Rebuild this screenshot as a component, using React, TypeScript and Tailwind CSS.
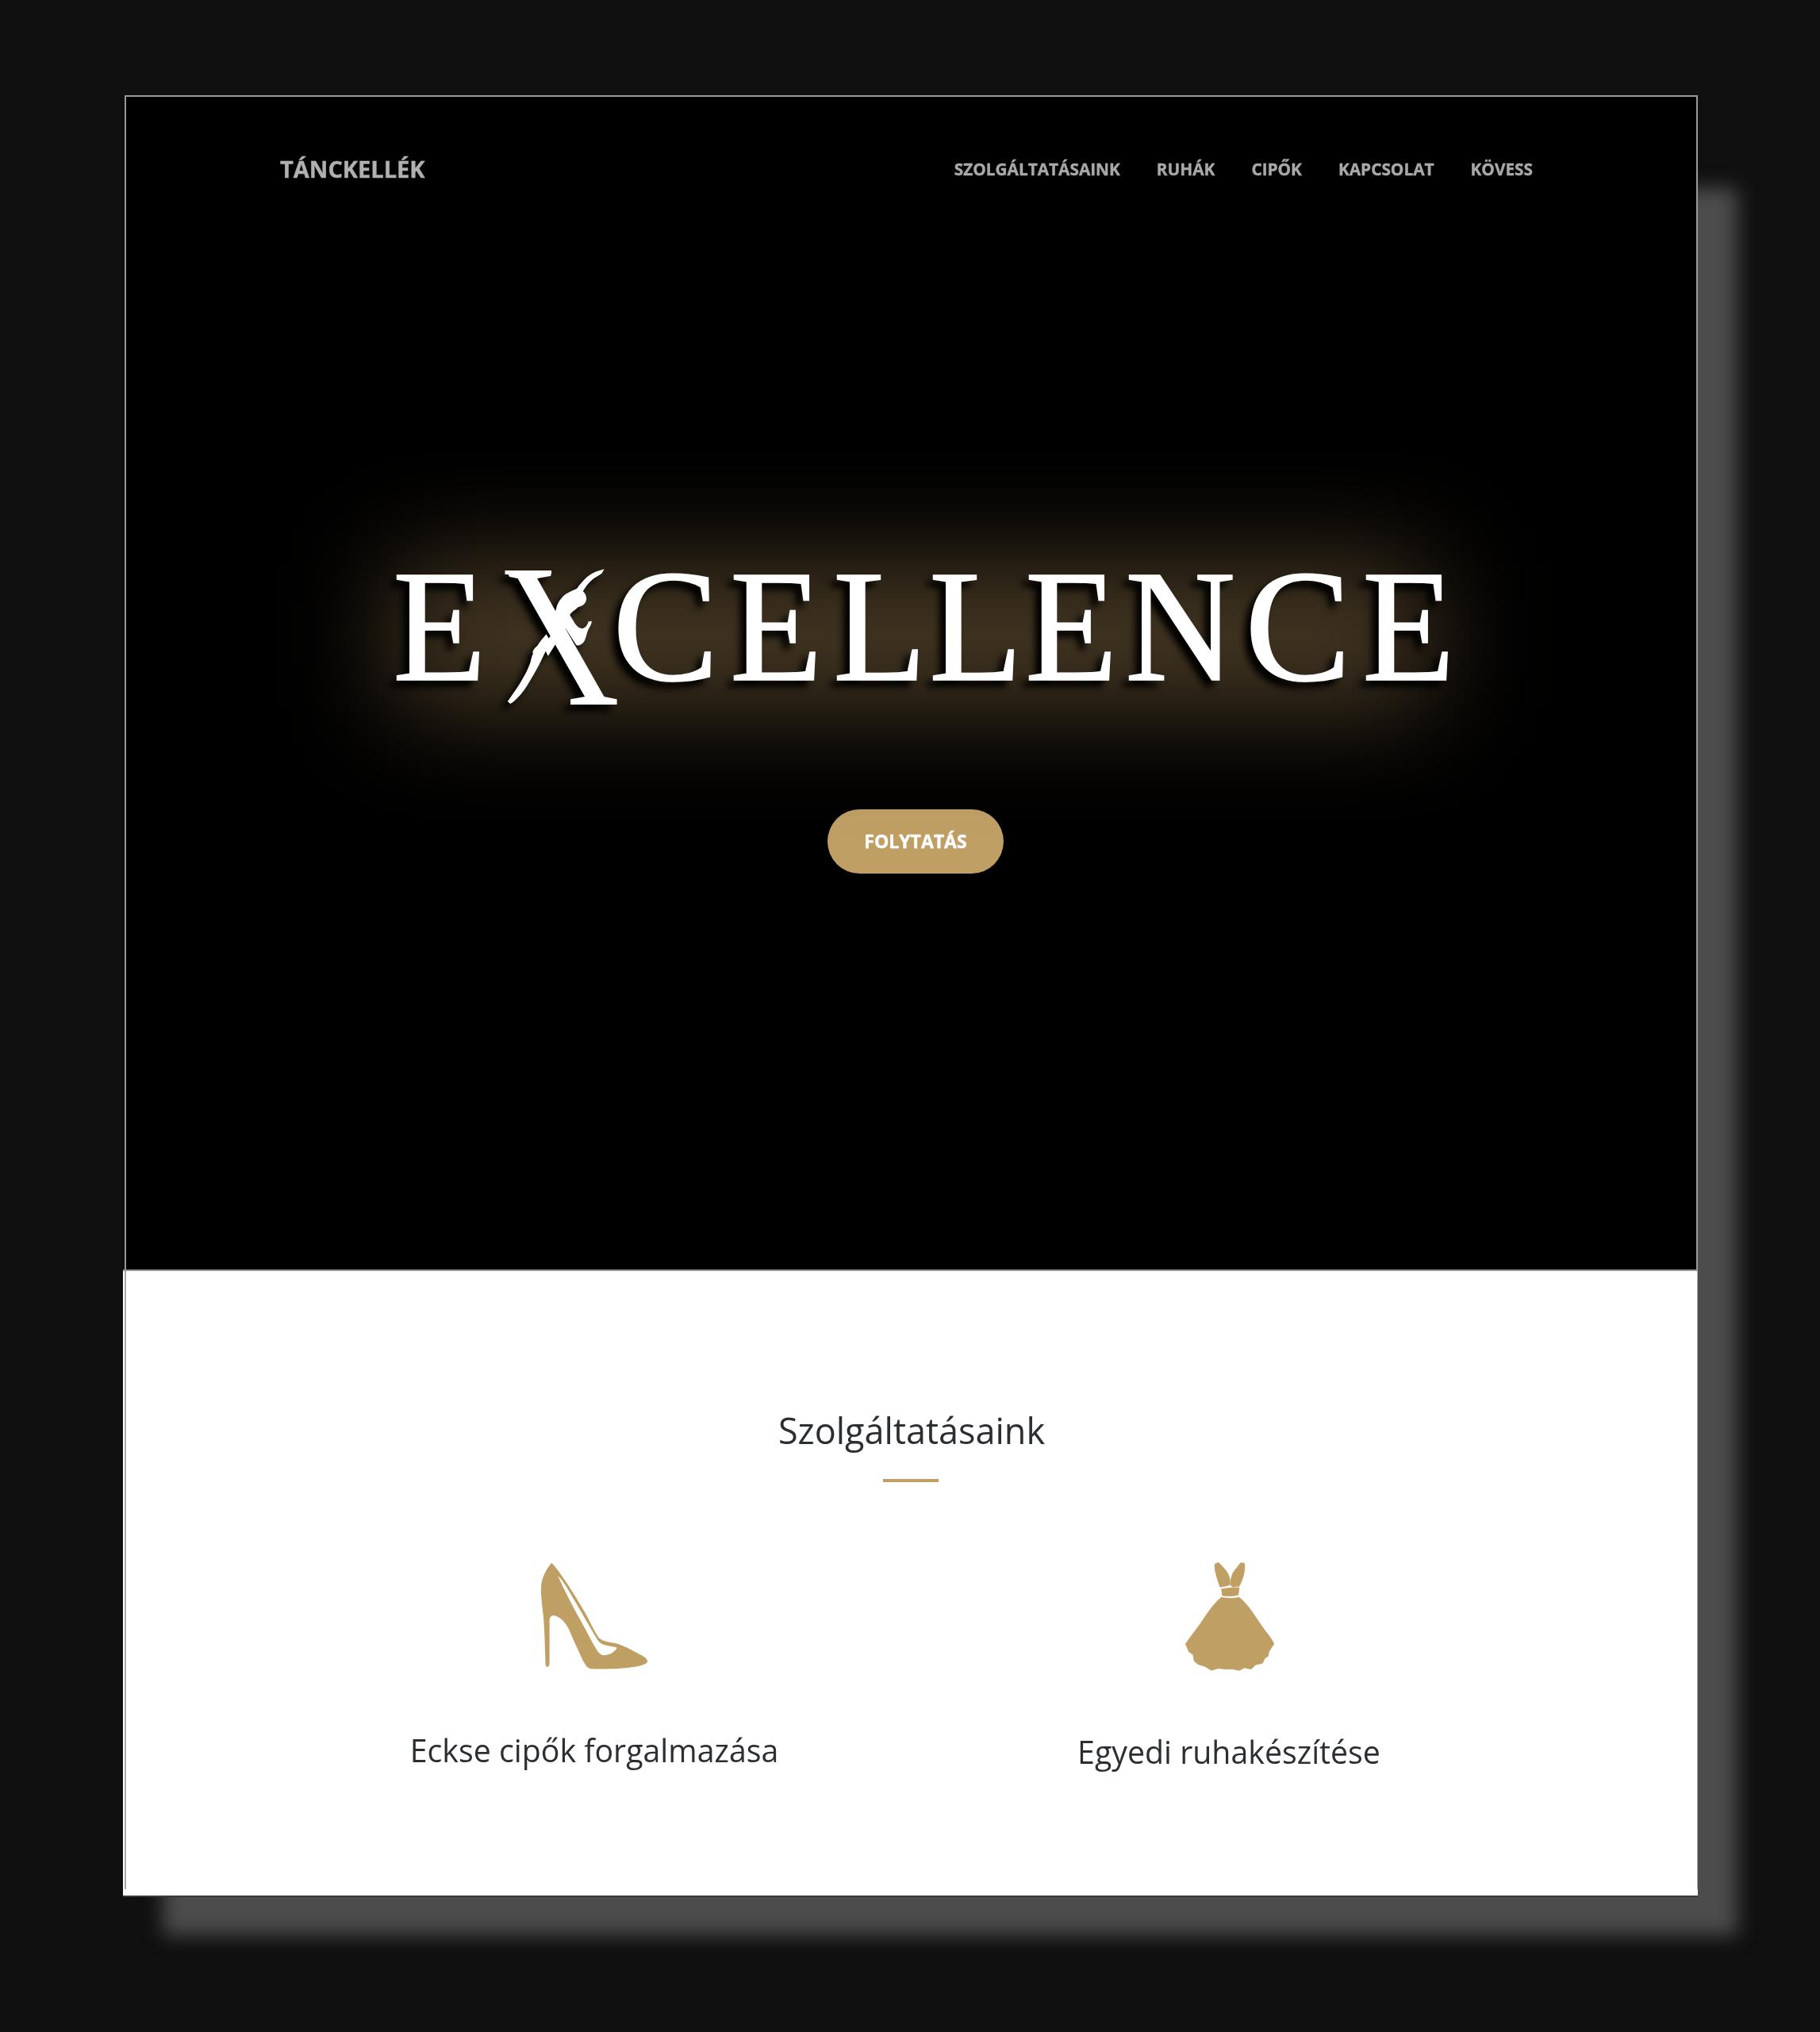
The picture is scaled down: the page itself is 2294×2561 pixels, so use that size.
import React from "react";

const GOLD = "#c09f65";

function Dancer() {
  return (
    <svg viewBox="580 285 440 525" className="absolute left-[-2px] top-[14px] w-[147px] h-[175px]" fill="#fff">
      <path d="M965 292 L945 298 C930 302 915 310 900 322 C885 335 872 352 862 365 C850 372 835 376 822 385 C805 397 792 415 786 432 L780 455 L860 580 C872 582 885 575 892 560 C898 545 900 530 906 518 C912 508 918 498 918 488 L906 490 C902 502 896 514 884 516 C870 518 858 505 850 490 C845 480 838 472 835 464 C845 452 858 445 866 436 C880 432 896 425 898 405 C898 392 892 382 885 376 C892 362 905 345 922 330 C935 320 948 314 956 308 Z" />
      <path d="M746 538 C735 552 722 565 712 582 C700 592 692 602 696 612 C688 625 690 640 680 660 C668 690 645 730 600 792 L610 801 C630 790 652 765 672 735 C690 705 715 665 735 620 C745 600 755 585 764 568 Z" />
    </svg>
  );
}

function Logo() {
  return (
    <div className="relative h-[180px] pl-[336px] mt-[395px]">
      <div className="absolute left-[335px] top-[10px] w-[1310px] h-[180px] bg-[#483a25] blur-[68px]" />
      <div className="relative flex items-start text-white font-['Liberation_Serif',serif] [filter:drop-shadow(-8px_8px_4px_#000)]">
        <span className="block shrink-0 w-[140px] text-[201px] leading-[176px] [-webkit-text-stroke:1.5px_#fff] scale-x-[0.96] origin-left">E</span>
        <span className="relative block shrink-0 w-[137px] h-[176px]">
          <span className="absolute left-[-10px] top-[-10px] block text-[258px] leading-[220px] scale-x-[0.84] origin-left [clip-path:polygon(0_0,50%_0,50%_15%,44%_15%,90%_84%,100%_84%,100%_100%,50%_100%,50%_85%,58%_85%,10%_15%,0_15%)]">
            X
          </span>
          <Dancer />
        </span>
        <div className="flex text-[201px] leading-[176px] [-webkit-text-stroke:1.5px_#fff]">
          <span className="block shrink-0 w-[148px]">C</span>
          <span className="block shrink-0 w-[130px] scale-x-[0.95] origin-left">E</span>
          <span className="block shrink-0 w-[121px] scale-x-[0.96] origin-left">L</span>
          <span className="block shrink-0 w-[121px] scale-x-[0.96] origin-left">L</span>
          <span className="block shrink-0 w-[126px] scale-x-[0.95] origin-left">E</span>
          <span className="block shrink-0 w-[151px] scale-x-[0.96] origin-left">N</span>
          <span className="block shrink-0 w-[148px]">C</span>
          <span className="block shrink-0 w-[130px] scale-x-[0.95] origin-left">E</span>
        </div>
      </div>
    </div>
  );
}

function Shoe() {
  return (
    <svg viewBox="120 80 415 415" className="w-[138px] h-[138px] blur-[0.4px]" fill={GOLD}>
      <path
        fillRule="evenodd"
        d="M165 88 C180 100 200 130 220 160 C250 205 280 255 300 290 C315 320 330 350 342 368 C350 382 375 388 405 392 C440 400 480 425 510 440 C525 448 532 458 528 466 C520 475 500 480 470 484 C430 490 370 492 315 490 C300 488 290 470 278 445 C265 415 250 385 240 360 C228 325 205 295 178 288 C165 286 158 292 158 310 L158 470 C157 480 152 484 147 482 C143 480 142 470 142 450 L139 360 L135 290 C130 255 125 210 126 180 C128 150 140 120 165 88 Z M190 138 C205 150 222 178 255 235 C275 268 310 330 335 372 C345 392 360 400 378 402 C390 405 405 406 414 410 C405 425 390 436 368 438 C355 440 345 430 335 415 C320 390 305 360 275 305 C255 270 220 205 190 138 Z"
      />
    </svg>
  );
}

function Dress() {
  return (
    <svg viewBox="90 80 345 420" className="w-[115px] h-[140px] blur-[0.4px]" fill={GOLD} stroke={GOLD} strokeWidth="2" strokeLinejoin="round">
      <path d="M208 92 L222 87 C232 98 245 110 255 125 C262 138 266 150 265 165 L263 172 L245 177 L228 180 C222 165 215 145 212 130 C208 115 206 105 208 92 Z" />
      <path d="M305 88 L320 90 C322 105 320 125 315 140 C310 155 305 168 300 177 L275 180 L267 172 C266 155 270 140 277 125 C285 112 297 100 305 88 Z" />
      <path d="M233 187 L262 183 L300 182 L296 210 C280 214 255 215 236 212 Z" />
      <path d="M232 219 C255 223 280 223 300 219 C312 228 328 245 345 268 C362 292 380 320 398 345 C412 362 425 380 432 395 L422 408 L412 425 L410 440 L396 450 L388 468 L362 474 L345 490 L320 485 L300 495 L275 490 L250 490 L220 487 L195 495 L170 480 L145 472 L130 460 L125 435 L110 425 L97 395 C110 375 130 350 155 315 C175 285 200 245 232 219 Z" />
    </svg>
  );
}

export default function App() {
  const nav = ["SZOLGÁLTATÁSAINK", "RUHÁK", "CIPŐK", "KAPCSOLAT", "KÖVESS"];
  return (
    <div className="w-[2294px] h-[2561px] bg-[#101010] pt-[120px] pl-[155px] overflow-hidden font-['Open_Sans',sans-serif]">
      <div className="relative w-[1985px]">
        <div className="absolute left-[50px] right-[-50px] top-[117px] bottom-[-48px] bg-[#4c4c4c] blur-[12px]" />
        <main className="relative">
          <section className="relative ml-[2px] h-[1480px] bg-black border-t-2 border-x-2 border-[#9a9a9a] flex flex-col">
            <header className="flex items-center h-[184px] pl-[194px] pr-[206px] justify-between">
              <div className="text-[29px] font-bold text-[#b0b0b0] blur-[0.4px] mt-[-3px] [-webkit-text-stroke:0.4px_#b0b0b0]">TÁNCKELLÉK</div>
              <nav className="flex gap-[46px] text-[20.8px] font-bold text-[#a8a8a8] blur-[0.4px] [-webkit-text-stroke:0.4px_#a8a8a8]">
                {nav.map((n) => (
                  <span key={n}>{n}</span>
                ))}
              </nav>
            </header>
            <Logo />
            <div className="flex justify-center mt-[139px] pl-[11px]">
              <button className="w-[222px] h-[81px] rounded-full bg-[#c09f65] text-white text-[23px] font-bold">
                <span className="blur-[0.3px] [-webkit-text-stroke:0.4px_#fff]">FOLYTATÁS</span>
              </button>
            </div>
          </section>
          <section className="relative bg-white h-[791px] border-t-2 border-b-2 border-t-[#9a9a9a] border-b-[#3a3a3a] text-[#2b2e33]">
            <div className="absolute left-[2px] top-0 bottom-[8px] w-[1.5px] bg-[#a8a8a8]" />
            <div className="absolute right-0 top-0 bottom-[8px] w-[1.5px] bg-[#a8a8a8]" />
            <h2 className="text-center text-[45px] font-normal pt-[171px] pl-[3px] leading-[60px] blur-[0.4px]">Szolgáltatásaink</h2>
            <div className="w-[70px] h-[4px] bg-[#c09f65] mx-auto mt-[31px] blur-[0.4px]" />
            <div className="grid grid-cols-2 mt-[99px] pl-[194px] pr-[191px]">
              <div className="flex flex-col items-center">
                <Shoe />
                <p className="text-[39.3px] mt-[73px] leading-[56px] blur-[0.3px]">Eckse cipők forgalmazása</p>
              </div>
              <div className="flex flex-col items-center">
                <Dress />
                <p className="text-[39.3px] mt-[73px] leading-[56px] blur-[0.3px]">Egyedi ruhakészítése</p>
              </div>
            </div>
          </section>
        </main>
      </div>
    </div>
  );
}
